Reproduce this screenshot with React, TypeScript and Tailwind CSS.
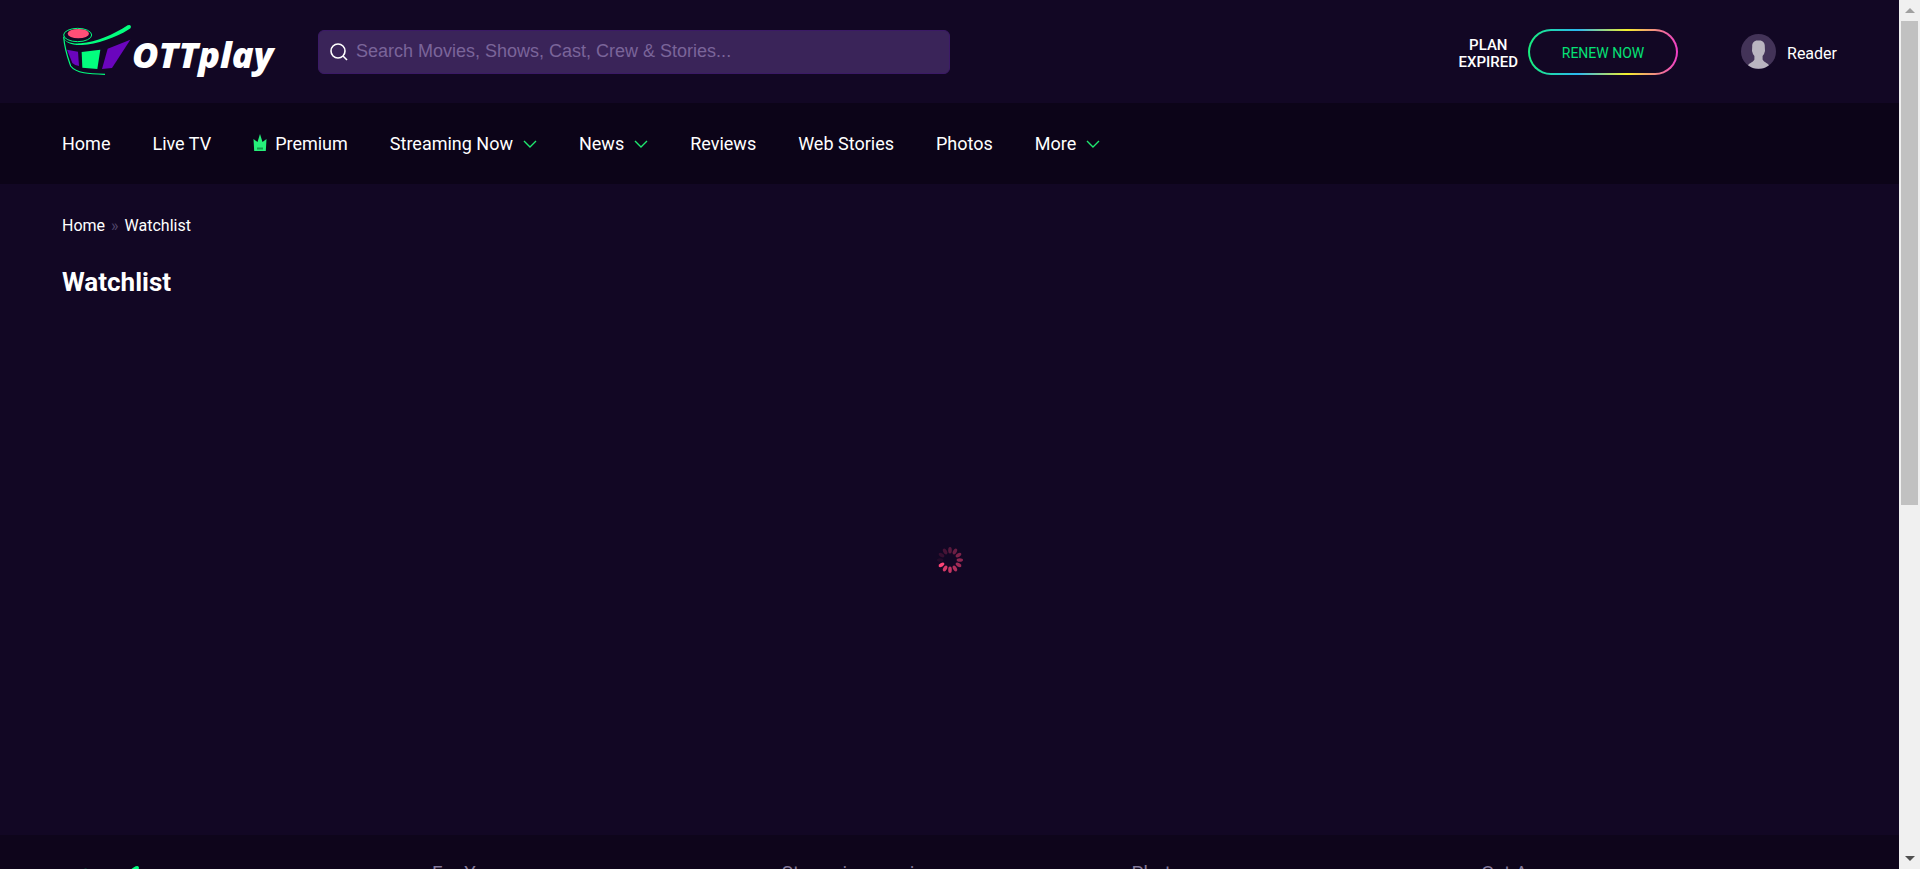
import { ReactNode } from "react";

function LogoMark() {
  return (
    <svg viewBox="36 42 210 156" className="h-[52px] w-[70px] shrink-0" fill="none" aria-hidden="true">
      <path d="M51 119 84 125 87 168Q74 166 67 159Z" fill="#6a05bd" />
      <path d="M95 126 151 119 142 177 97 173Z" fill="#03fd7e" />
      <path d="M173 116 241 89 186 174 156 177Z" fill="#6a05bd" />
      <path d="M41 80C44 120 54 145 62 168C78 190 118 192 165 193" stroke="#03fd7e" strokeWidth="3.5" />
      <ellipse cx="83" cy="75" rx="42" ry="20" stroke="#03fd7e" strokeWidth="3" />
      <ellipse cx="85" cy="71" rx="32" ry="14" fill="#ff4f78" />
      <path
        d="M39 77C42 96 66 102 92 100C140 96 190 74 233 46Q242 42 243 50Q243 55 237 58C196 84 140 103 96 105C62 106 41 96 39 77Z"
        fill="#03fd7e"
      />
    </svg>
  );
}

function Logo() {
  return (
    <a href="#home" aria-label="OTTplay" className="flex w-[218px] shrink-0 items-center pb-1">
      <LogoMark />
      <span className="pt-2.5 font-['Open_Sans',sans-serif] text-[36px] leading-10 font-extrabold text-white italic">
        OTTplay
      </span>
    </a>
  );
}

function Chevron() {
  return (
    <svg viewBox="0 0 14 8" className="ml-2.5 h-2 w-3.5" fill="none" aria-hidden="true">
      <path d="M1 1 7 7 13 1" stroke="#1fe86f" strokeWidth="1.4" />
    </svg>
  );
}

function Crown() {
  return (
    <svg viewBox="0 0 14 18" className="mr-2 mb-0.5 h-[18px] w-3.5" aria-hidden="true">
      <path d="M0.5 5 4.5 8 7 0 9.5 8 13.5 5 12.8 17H1.2Z" fill="#26f07a" />
      <path d="M4 13.5H10V15.5H4Z" fill="#149a4d" />
    </svg>
  );
}

function NavItem({ label, icon, menu }: { label: string; icon?: ReactNode; menu?: boolean }) {
  const style = "flex items-center whitespace-nowrap text-lg leading-6 text-white";
  return (
    <li>
      {menu ? (
        <button type="button" aria-haspopup="true" className={style}>
          {label}
          <Chevron />
        </button>
      ) : (
        <a href="#section" className={style}>
          {icon}
          {label}
        </a>
      )}
    </li>
  );
}

function Spinner() {
  return (
    <svg viewBox="-13 -13 26 26" className="size-[26px]" role="status" aria-label="Loading">
      {Array.from({ length: 12 }, (_, i) => (
        <ellipse
          key={i}
          cx="0"
          cy="-9.8"
          rx="1.8"
          ry="3.2"
          fill="#ff4477"
          opacity={i === 8 ? 1 : 0.08 + (((i + 3) % 12) / 11) * 0.82}
          transform={`rotate(${i * 30})`}
        />
      ))}
    </svg>
  );
}

function Scrollbar() {
  return (
    <div className="flex w-[21px] shrink-0 flex-col items-center bg-[#f0f0f0]" aria-hidden="true">
      <div className="flex h-[21px] items-center">
        <svg viewBox="0 0 10 5" className="h-[5px] w-2.5">
          <path d="M5 0 10 5H0Z" fill="#a0a0a0" />
        </svg>
      </div>
      <div className="flex w-full grow flex-col px-0.5">
        <div className="h-[58.5%] bg-[#c1c1c1]" />
      </div>
      <div className="flex h-[21px] items-center">
        <svg viewBox="0 0 10 5" className="h-[5px] w-2.5">
          <path d="M0 0H10L5 5Z" fill="#505050" />
        </svg>
      </div>
    </div>
  );
}

export default function App() {
  return (
    <div className="flex h-screen bg-[#120724] font-['Roboto','Liberation_Sans',sans-serif] text-white">
      <div className="flex grow flex-col overflow-y-auto [scrollbar-width:none]">
        <header className="flex h-[103px] shrink-0 items-center px-[62px]">
          <Logo />
          <div className="ml-[38px] flex h-11 w-[632px] items-center rounded-md border border-[#3b1a66] bg-[#3a2459] pl-[11px]">
            <svg viewBox="0 0 18 18" className="size-[18px] shrink-0" fill="none" stroke="#fff" strokeWidth="1.6" aria-hidden="true">
              <circle cx="8" cy="8" r="7" />
              <path d="M13 13 17 17" />
            </svg>
            <input
              type="search"
              aria-label="Search"
              placeholder="Search Movies, Shows, Cast, Crew & Stories..."
              className="ml-2 grow bg-transparent pb-0.5 font-['Liberation_Sans',sans-serif] text-lg leading-6 text-white outline-none placeholder:text-[#7a659a]"
            />
          </div>
          <p className="ml-auto pt-1 text-center text-[15px] leading-[17px] font-medium">
            PLAN
            <br />
            EXPIRED
          </p>
          <a
            href="#renew"
            className="ml-2.5 rounded-full bg-[linear-gradient(90deg,#17ef7c_0%,#2bb8f0_33%,#f4f02c_66%,#f03cc8_100%)] p-0.5"
          >
            <span className="flex h-[42px] w-[146px] items-center justify-center rounded-full bg-[#120724] pt-0.5 text-sm text-[#05e276]">
              RENEW NOW
            </span>
          </a>
          <button type="button" className="ml-[63px] flex items-center">
            <svg viewBox="0 0 35 35" className="size-[35px]" aria-hidden="true">
              <circle cx="17.5" cy="17.5" r="17.5" fill="#433358" />
              <path
                d="M17.5 6.5C22 6 24 9 23.8 12.5L24 17Q23.4 20 21.6 22V25.5C22.5 28 26 28.5 28 31.3A17.5 17.5 0 0 1 7 31.3C9 28.5 12.6 28 13.4 25.5V22Q11.6 20 11 17L11.2 12.5C11 9 13 6 17.5 6.5Z"
                fill="#bab5c0"
              />
            </svg>
            <span className="ml-[11px] pt-1 text-base leading-5">Reader</span>
          </button>
        </header>

        <nav aria-label="Main" className="flex h-[81px] shrink-0 items-center bg-[#0c0418] px-[62px]">
          <ul className="flex gap-[42px]">
            <NavItem label="Home" />
            <NavItem label="Live TV" />
            <NavItem label="Premium" icon={<Crown />} />
            <NavItem label="Streaming Now" menu />
            <NavItem label="News" menu />
            <NavItem label="Reviews" />
            <NavItem label="Web Stories" />
            <NavItem label="Photos" />
            <NavItem label="More" menu />
          </ul>
        </nav>

        <main className="flex min-h-[651px] shrink-0 flex-col px-[62px] pt-[30px]">
          <nav aria-label="Breadcrumb" className="flex gap-1.5 text-base leading-6">
            <a href="#home">Home</a>
            <span className="text-[#51466a]">»</span>
            <a href="#watchlist">Watchlist</a>
          </nav>
          <h1 className="mt-7 text-[26px] leading-8 font-bold">Watchlist</h1>
          <div className="mt-[249px] flex justify-center">
            <Spinner />
          </div>
        </main>

        <footer className="grid shrink-0 grid-cols-[370px_repeat(4,1fr)] bg-[#0e051b] pt-[26px] pr-[68px] pb-10 pl-[62px] text-[19px] leading-6 text-[#84799a]">
          <div className="pt-1 pl-2">
            <Logo />
          </div>
          <h2>For You</h2>
          <h2>Streaming movies</h2>
          <h2>Photos</h2>
          <h2>Get App</h2>
        </footer>
      </div>
      <Scrollbar />
    </div>
  );
}
